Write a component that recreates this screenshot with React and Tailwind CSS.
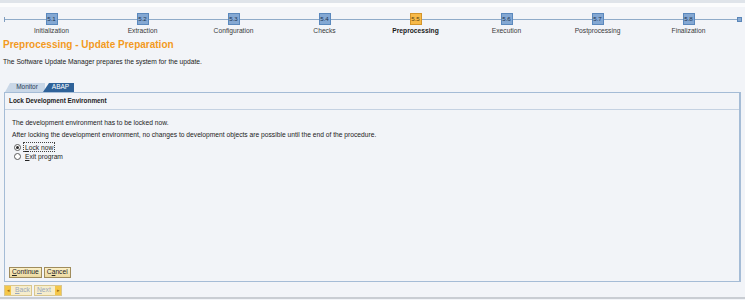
import React from 'react'

const steps = [
    { n: '5.1', label: 'Initialization' },
    { n: '5.2', label: 'Extraction' },
    { n: '5.3', label: 'Configuration' },
    { n: '5.4', label: 'Checks' },
    { n: '5.5', label: 'Preprocessing', active: true },
    { n: '5.6', label: 'Execution' },
    { n: '5.7', label: 'Postprocessing' },
    { n: '5.8', label: 'Finalization' },
]

function Roadmap() {
    return (
        <div className="relative h-[30px]">
            <div className="absolute left-[4px] right-[5px] top-[12px] h-px bg-[#8fabc9]" />
            <div className="absolute left-[4px] top-[10px] h-[5px] w-px bg-[#7f9dc0]" />
            <div className="absolute right-[3px] top-[10px] h-[5px] w-[5px] border border-[#5b86b8] bg-[#86a9d2]" />
            <div className="relative grid grid-cols-[repeat(8,91px)] pl-[6px]">
                {steps.map((s) => (
                    <div key={s.n} className="flex flex-col items-center">
                        <div
                            className={`mt-[6px] flex h-[12px] w-[12px] items-center justify-center border text-[6.2px] leading-none ${
                                s.active
                                    ? 'border-[#d4952a] bg-[#f7b948] text-[#5a4010]'
                                    : 'border-[#5a88bd] bg-[#84a8d3] text-[#1c3350]'
                            }`}
                        >
                            {s.n}
                        </div>
                        <div
                            className={`mt-[1px] text-[6.7px] leading-[9px] ${
                                s.active ? 'font-bold text-[#1a1a1a]' : 'text-[#3a3a3a]'
                            }`}
                        >
                            {s.label}
                        </div>
                    </div>
                ))}
            </div>
        </div>
    )
}

function Radio({ checked, children, focused }) {
    return (
        <div className={`flex items-center gap-[2px] ${focused ? 'h-[10px]' : 'h-[9px]'}`}>
            <span className="flex h-[7px] w-[7px] items-center justify-center rounded-full border border-[#5b5b5b] bg-white">
                {checked && <span className="h-[3px] w-[3px] rounded-full bg-[#2b2b2b]" />}
            </span>
            <span
                className={`flex h-[10px] items-center px-[1px] ${
                    focused ? 'border border-dotted border-[#444]' : 'border border-transparent'
                }`}
            >
                <span className="leading-[7px]">{children}</span>
            </span>
        </div>
    )
}

function SapButton({ children }) {
    return (
        <button className="h-[11px] border border-[#a08c5c] bg-gradient-to-b from-[#fbf0c8] to-[#ecd9a0] px-[2px] text-[6.7px] leading-none text-[#222]">
            {children}
        </button>
    )
}

export default function App() {
    return (
        <div
            className="h-[300px] w-[745px] overflow-hidden bg-[#f2f4f8] text-[#222]"
            style={{ fontFamily: '"Liberation Sans", Arial, sans-serif' }}
        >
            <div className="h-[3px] bg-[#dfe4ea]" />
            <div className="h-[4px] bg-[#fbfcfd]" />
            <Roadmap />
            <h1 className="mt-[1px] pl-[3px] text-[10px] font-bold leading-[14px] text-[#f39a1e]">
                Preprocessing - Update Preparation
            </h1>
            <p className="mt-[5px] pl-[3px] text-[6.7px] leading-[10px]">
                The Software Update Manager prepares the system for the update.
            </p>

            <div className="mt-[16px] flex pl-[5px] text-[6.5px] leading-none">
                <div className="flex h-[9px] w-[40px] items-center justify-center bg-[#c9d7e7] pl-[4px] text-[#2a3c55] [clip-path:polygon(5px_0,100%_0,100%_100%,0_100%)]">
                    Monitor
                </div>
                <div className="-ml-[2px] flex h-[9px] w-[31px] items-center justify-center bg-[#2f6299] pl-[4px] text-white [clip-path:polygon(6px_0,100%_0,100%_100%,0_100%)]">
                    ABAP
                </div>
            </div>

            <div className="mx-[4px] flex h-[190px] flex-col border border-[#a5bcd6] border-r-2">
                <div className="flex h-[17px] items-center border-b border-[#c5d2e2] pl-[4px] text-[6.4px] font-bold">
                    Lock Development Environment
                </div>
                <div className="flex flex-col pl-[7px] pt-[7px] text-[6.7px]">
                    <div className="leading-[12px]">The development environment has to be locked now.</div>
                    <div className="leading-[12px]">
                        After locking the development environment, no changes to development objects are possible until the end of the procedure.
                    </div>
                    <div className="ml-[2px] mt-[1px] flex flex-col">
                        <Radio checked focused>
                            <span className="underline">L</span>ock now
                        </Radio>
                        <Radio>
                            <span className="underline">E</span>xit program
                        </Radio>
                    </div>
                </div>
                <div className="mt-auto flex gap-[2px] pb-[3px] pl-[4px]">
                    <SapButton>
                        <span className="underline">C</span>ontinue
                    </SapButton>
                    <SapButton>
                        C<span className="underline">a</span>ncel
                    </SapButton>
                </div>
            </div>

            <div className="mt-[3px] flex gap-[2px] pl-[4px] text-[6.7px] leading-none">
                <div className="flex h-[11px] w-[28px] items-center border border-[#d9c68e] bg-[#f6edcc] text-[#9aa8bd]">
                    <span className="flex h-full w-[6px] items-center justify-center bg-[#f4c74a] text-[5px] text-[#9a6c10]">◂</span>
                    <span className="ml-[4px]">
                        <span className="underline">B</span>ack
                    </span>
                </div>
                <div className="flex h-[11px] w-[28px] items-center border border-[#d9c68e] bg-[#f6edcc] text-[#9aa8bd]">
                    <span className="ml-[2px] flex-1">
                        <span className="underline">N</span>ext
                    </span>
                    <span className="flex h-full w-[6px] items-center justify-center bg-[#f4c74a] text-[5px] text-[#9a6c10]">▸</span>
                </div>
            </div>
            <div className="mt-[1px] h-[2px] bg-[#c9cdd3]" />
        </div>
    )
}
